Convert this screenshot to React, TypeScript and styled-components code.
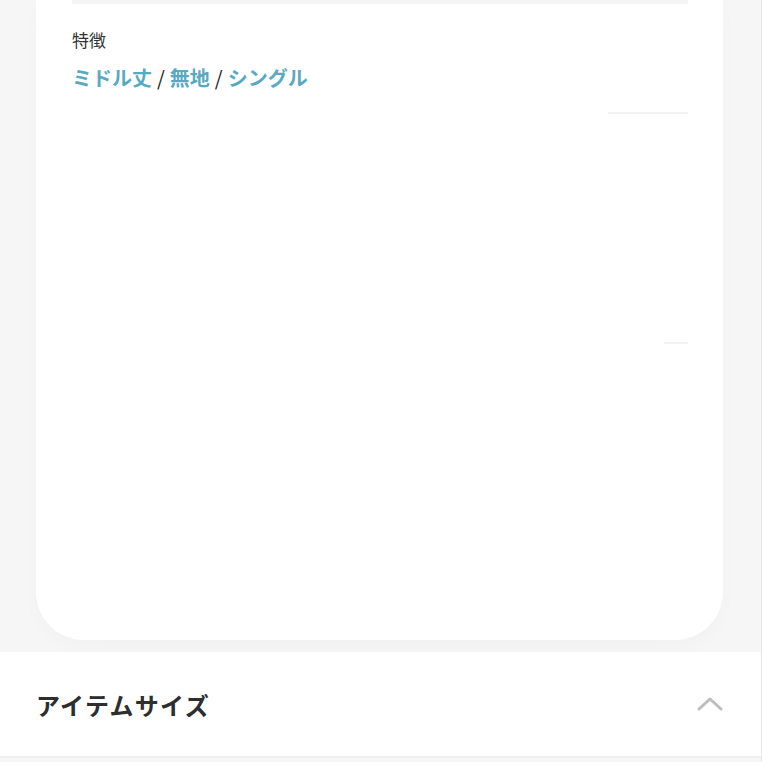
import React from "react";
import styled, { createGlobalStyle } from "styled-components";

const Global = createGlobalStyle`
  html, body {
    margin: 0;
    padding: 0;
    background: #f6f6f6;
    font-family: "Noto Sans CJK JP", "Noto Sans", sans-serif;
  }
`;

const Page = styled.div`
  width: 762px;
  height: 762px;
  overflow: hidden;
  display: flex;
  flex-direction: column;
  background: #f6f6f6;
  border-right: 1px solid #e6e6e6;
  box-sizing: border-box;
`;

const Card = styled.div`
  margin: 0 38px 0 36px;
  height: 640px;
  background: #ffffff;
  border-radius: 0 0 48px 48px;
  box-shadow: 0 8px 20px rgba(0, 0, 0, 0.02);
  padding: 0 35px 0 36px;
  box-sizing: border-box;
  display: flex;
  flex-direction: column;
`;

const TopStrip = styled.div`
  height: 4px;
  background: #f5f5f5;
`;

const Label = styled.div`
  margin-top: 24px;
  font-size: 17px;
  line-height: 24px;
  color: #333;
`;

const Tags = styled.div`
  margin-top: 12px;
  font-size: 20px;
  line-height: 28px;
  font-weight: 700;
  color: #5aa9c3;
  display: flex;
  align-items: baseline;
  gap: 5px;
`;

const Slash = styled.span`
  color: #222;
  font-weight: 400;
`;

const FaintLine = styled.div<{ $w: number; $top: number }>`
  align-self: flex-end;
  width: ${(p) => p.$w}px;
  height: 2px;
  margin-top: ${(p) => p.$top}px;
  background: #f2f2f2;
`;

const Section = styled.div`
  margin-top: 12px;
  height: 106px;
  background: #fff;
  border-bottom: 2px solid #eeeeee;
  display: flex;
  align-items: center;
  justify-content: space-between;
  padding: 0 37px 0 36px;
  box-sizing: border-box;
`;

const SectionTitle = styled.h2`
  margin: 0;
  font-size: 24px;
  font-weight: 700;
  color: #2e2e2e;
  letter-spacing: 1.3px;
`;

const Chevron = styled.svg`
  width: 28px;
  height: 16px;
`;

export default function App() {
  return (
    <>
      <Global />
      <Page>
        <Card>
          <TopStrip />
          <Label>特徴</Label>
          <Tags>
            <span>ミドル丈</span>
            <Slash>/</Slash>
            <span>無地</span>
            <Slash>/</Slash>
            <span>シングル</span>
          </Tags>
          <FaintLine $w={80} $top={20} />
          <FaintLine $w={24} $top={228} />
        </Card>
        <Section>
          <SectionTitle>アイテムサイズ</SectionTitle>
          <Chevron viewBox="0 0 28 16">
            <polyline points="3,13 14,3 25,13" fill="none" stroke="#bdbdbd" strokeWidth="3" strokeLinecap="round" strokeLinejoin="round" />
          </Chevron>
        </Section>
      </Page>
    </>
  );
}
